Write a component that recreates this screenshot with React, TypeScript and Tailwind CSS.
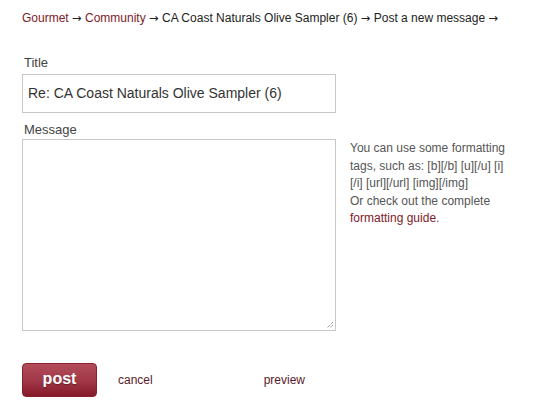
function Arrow() {
  return <span className="text-[11.5px]" style={{ fontFamily: '"DejaVu Sans", sans-serif' }}>→</span>;
}

export default function App() {
  return (
    <div className="w-[534px] h-[414px] bg-white text-[#222] overflow-hidden" style={{ fontFamily: '"Liberation Sans", Arial, sans-serif' }}>
      <div className="pl-[22px] pt-[11px] h-[26px] text-[12px] leading-[15px] whitespace-nowrap">
        <a className="text-[#7d1a28]">Gourmet</a> <Arrow /> <a className="text-[#7d1a28]">Community</a> <Arrow /> CA Coast Naturals Olive Sampler (6) <Arrow /> Post a new message <Arrow />
      </div>
      <div className="pl-[22px] pt-[29px]">
        <div className="pl-[2px] text-[13px] leading-[16px] text-[#444]">Title</div>
        <div className="mt-[3px] w-[314px] h-[39px] border border-[#c8c8c8] flex items-center pl-[5px] text-[14px] text-[#333]">
          Re: CA Coast Naturals Olive Sampler (6)
        </div>
        <div className="pl-[2px] mt-[9px] text-[13px] leading-[16px] text-[#444]">Message</div>
        <div className="mt-[1px] flex">
          <div className="relative w-[314px] h-[192px] border border-[#c8c8c8]">
            <svg className="absolute right-[1px] bottom-[1px]" width="9" height="9" viewBox="0 0 9 9">
              <path d="M8 2 L2 8 M8 5 L5 8" stroke="#777" strokeWidth="1" strokeDasharray="1 1" />
            </svg>
          </div>
          <div className="ml-[14px] pt-[1px] text-[12px] leading-[17.6px] text-[#555]">
            <div>You can use some formatting</div>
            <div>tags, such as: [b][/b] [u][/u] [i]</div>
            <div>[/i] [url][/url] [img][/img]</div>
            <div>Or check out the complete</div>
            <div><a className="text-[#7d1a28]">formatting guide</a>.</div>
          </div>
        </div>
        <div className="mt-[32px] flex items-center">
          <button className="w-[75px] h-[34px] rounded-[4px] border border-[#8a1f2e] bg-gradient-to-b from-[#b24d5c] via-[#a23848] to-[#85192a] text-white text-[16px] font-bold leading-none pb-[2px]" style={{ textShadow: '0 1px 1px rgba(0,0,0,0.35)' }}>
            post
          </button>
          <a className="ml-[21px] text-[12px] text-[#5a1a28]">cancel</a>
          <a className="ml-[111px] text-[12px] text-[#5a1a28]">preview</a>
        </div>
      </div>
    </div>
  );
}
